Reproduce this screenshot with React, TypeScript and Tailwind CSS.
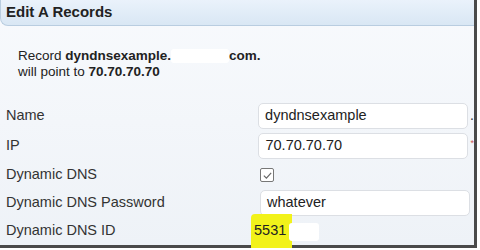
import React from "react"

const font = { fontFamily: '"Liberation Sans", Arial, sans-serif' }

function Row({ label, h, children }: { label: string; h: string; children?: React.ReactNode }) {
  return (
    <div className={`flex items-center ${h}`}>
      <div className="w-[260px] pl-[6px] text-[14.5px] text-[#333]">{label}</div>
      <div className="flex-1 flex items-center">{children}</div>
    </div>
  )
}

function Field({ value }: { value: string }) {
  return (
    <div className="w-[210px] h-[26px] rounded-[5px] border border-[#dcdfe4] bg-white flex items-center px-[6px] text-[14.5px] text-[#222]">
      {value}
    </div>
  )
}

export default function App() {
  return (
    <div className="w-[480px] h-[250px] bg-white overflow-hidden" style={font}>
      <div className="w-[477px] h-[248px] border-r-[3px] border-b-[3px] border-[#4a4a4a] bg-gradient-to-b from-[#f8fafd] to-[#eef2f7] flex flex-col">
        <div className="h-[32px] flex items-center px-[5px] bg-gradient-to-b from-[#eaf2fb] to-[#d9e7f4] border-b border-l border-[#b9cde0] rounded-bl-[8px]">
          <span className="text-[15px] font-bold text-[#222]">Edit A Records</span>
        </div>

        <div className="pl-[18px] pt-[22px] text-[13.5px] leading-[16px] text-[#222]">
          <div className="flex items-center">
            <span>Record&nbsp;</span>
            <span className="font-bold">dyndnsexample.</span>
            <span className="w-[58px] h-[14px] bg-white rounded-[3px]" />
            <span className="font-bold">com.</span>
          </div>
          <div>
            will point to <span className="font-bold">70.70.70.70</span>
          </div>
        </div>

        <div className="mt-[20px] flex flex-col">
          <Row label="Name" h="h-[31px]">
            <Field value="dyndnsexample" />
            <span className="ml-[2px] text-[14px] text-[#333]">.</span>
          </Row>
          <Row label="IP" h="h-[30px]">
            <Field value="70.70.70.70" />
            <span className="ml-[2px] text-[9px] text-[#c55] self-start mt-[4px]">*</span>
          </Row>
          <Row label="Dynamic DNS" h="h-[28px]">
            <div className="w-[14px] h-[14px] border border-[#777] rounded-[2px] flex items-center justify-center bg-white">
              <svg width="11" height="11" viewBox="0 0 12 12" fill="none" stroke="#666" strokeWidth="1.3">
                <path d="M2 6.2 L4.8 9 L10 3.2" />
              </svg>
            </div>
          </Row>
          <Row label="Dynamic DNS Password" h="h-[28px]">
            <Field value="whatever" />
          </Row>
          <Row label="Dynamic DNS ID" h="h-[28px]">
            <div className="-ml-[9px] h-[34px] w-[41px] bg-[#f2f21a] flex items-center pl-[3px] text-[14.5px] text-[#222] relative rounded-tl-[4px]">
              5531
              <span className="absolute left-[38px] top-[9px] w-[30px] h-[18px] bg-white rounded-[3px]" />
            </div>
          </Row>
        </div>
      </div>
    </div>
  )
}
